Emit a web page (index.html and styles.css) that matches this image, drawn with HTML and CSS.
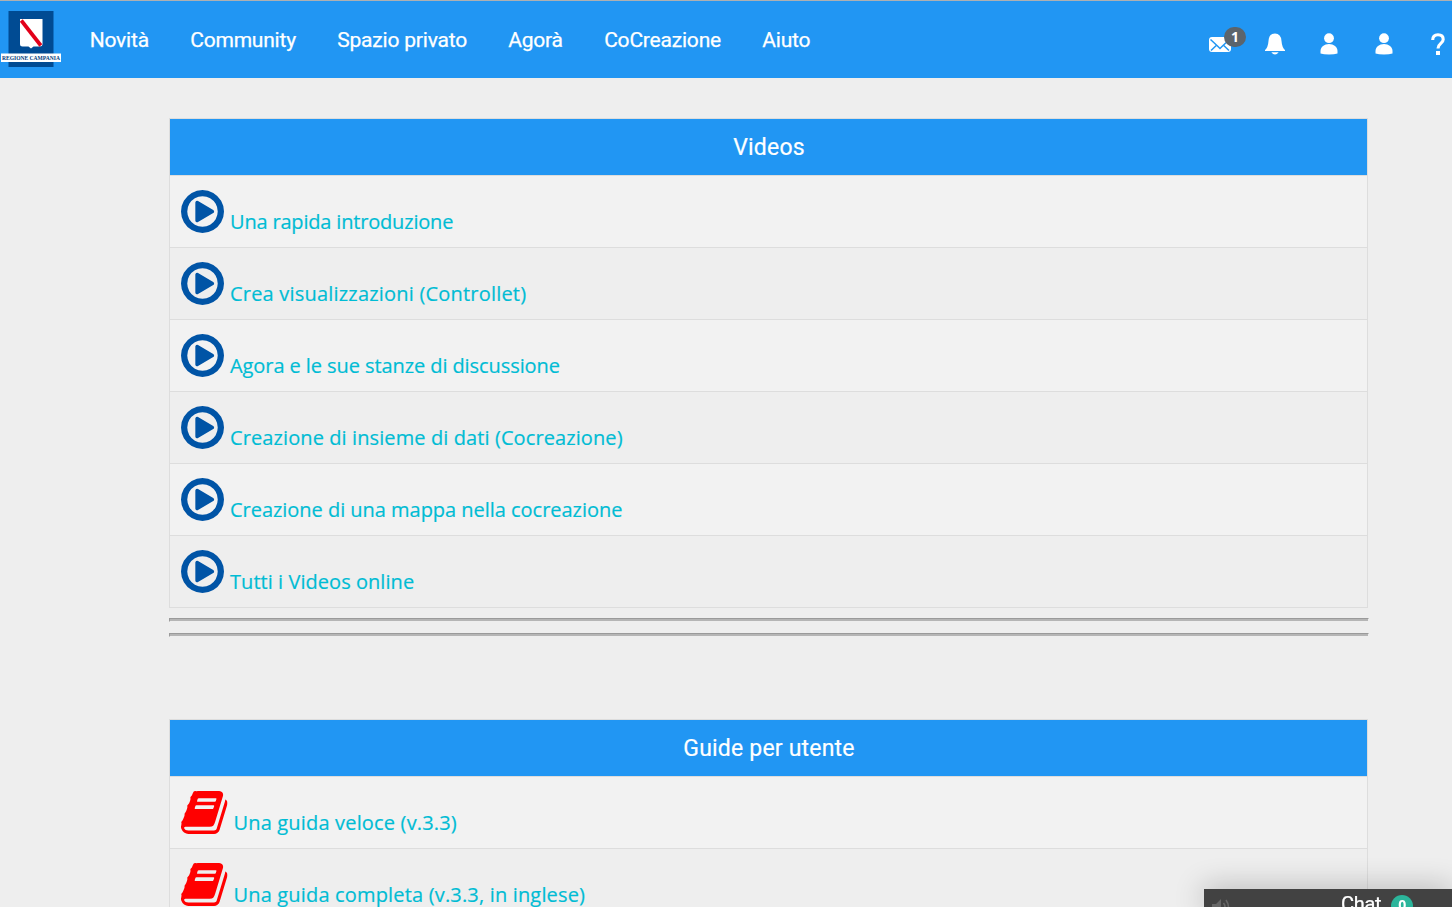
FILE: index.html
```html
<!DOCTYPE html>
<html lang="it">
<head>
<meta charset="utf-8">
<title>Aiuto</title>
<link rel="stylesheet" href="styles.css">
</head>
<body>
<svg class="defs" width="0" height="0">
  <symbol id="play" viewBox="0 0 1536 1536"><path d="M1184 768q0 37-32 55l-544 320q-15 9-32 9-16 0-32-8-32-19-32-56V448q0-37 32-56 33-18 64 1l544 320q32 18 32 55zm128 0q0-148-73-273t-198-198-273-73-273 73-198 198-73 273 73 273 198 198 273 73 273-73 198-198 73-273zm224 0q0 209-103 385.500t-279.500 279.500-385.500 103-385.500-103-279.500-279.500-103-385.500 103-385.500 279.500-279.500 385.500-103 385.500 103 279.500 279.500 103 385.500z"/></symbol>
  <symbol id="book" viewBox="64 128 1664 1536"><path d="M1703 478q40 57 18 129l-275 906q-19 64-76.500 107.500t-122.500 43.500h-923q-77 0-148.500-53.500t-99.500-131.500q-24-67-2-127 0-4 3-27t4-37q1-8-3-21.500t-3-19.500q2-11 8-21t16.500-23.500 16.500-23.500q23-38 45-91.500t30-91.500q3-10 .5-30t-.5-28q3-11 17-28t17-23q21-36 42-92t25-90q1-9-2.500-32t.5-28q4-13 22-30.500t22-22.500q19-26 42.500-84.500t27.500-96.500q1-8-3-25.500t-2-26.500q2-8 9-18t18-23 17-21q8-12 16.500-30.500t15-35 16-36 19.500-32 26.500-23.500 36-11.500 47.500 5.500l-1 3q38-9 51-9h761q74 0 114 56t18 130l-274 906q-36 119-71.500 153.500t-128.500 34.500h-869q-27 0-38 15-11 16-1 43 24 70 144 70h923q29 0 56-15.500t35-41.500l300-987q7-22 5-57 38 15 59 43zm-1064 2q-4 13 2 22.500t20 9.500h608q13 0 25.500-9.500t16.500-22.500l21-64q4-13-2-22.500t-20-9.500h-608q-13 0-25.500 9.500t-16.500 22.500zm-83 256q-4 13 2 22.500t20 9.500h608q13 0 25.500-9.500t16.500-22.500l21-64q4-13-2-22.500t-20-9.500h-608q-13 0-25.500 9.500t-16.500 22.500z"/></symbol>
  <symbol id="person" viewBox="0 0 18 22"><circle cx="9" cy="5.200" r="4.900"/><path d="M.5 20.500V18C.5 14 4.300 11 9 11s8.500 3 8.500 7v2.500q-3 1-8.500 1t-8.500-1z"/></symbol>
</svg>
<header class="topbar">
  <svg class="logo" viewBox="0 0 62 58" width="62" height="58">
    <rect x="8.500" y="1" width="45" height="56" fill="#004b93"/>
    <path d="M20 9h22.500v25q0 2.500-3 2.500h-6l-2.500 2-2.500-2h-6q-2.500 0-2.500-2.500z" fill="#fff"/>
    <path d="M21.300 10.500L40.800 35.500" stroke="#e2001a" stroke-width="3.700"/>
    <rect x="1" y="43.500" width="60" height="8.500" fill="#fff"/>
    <text class="logo-name" x="2" y="50" textLength="58" lengthAdjust="spacingAndGlyphs">REGIONE CAMPANIA</text>
  </svg>
  <nav class="menu">
    <a>Novità</a><a>Community</a><a>Spazio privato</a><a>Agorà</a><a>CoCreazione</a><a>Aiuto</a>
  </nav>
  <div class="tools">
    <span class="mail">
      <svg viewBox="0 0 22 15" width="22" height="15"><rect width="22" height="15" rx="3" fill="#fff"/><path d="M1.500 2.500L8.500 9 11 11.500 13.500 9 20.500 2.500M2 13.500L7.800 8M20 13.500L14.200 8" fill="none" stroke="#2196f3" stroke-width="1.500"/></svg>
      <b class="badge">1</b>
    </span>
    <svg class="bell" viewBox="0 0 20 22" width="20" height="22" fill="#fff"><path d="M0 18v-1q3-2.500 3.500-9Q4 .5 10 .5T16.500 8q.5 6.500 3.500 9v1zM6.300 19.300h7.400Q12 21.500 10 21.500t-3.700-2.200z"/></svg>
    <svg class="user" width="18" height="22"><use href="#person"/></svg>
    <svg class="user" width="18" height="22"><use href="#person"/></svg>
    <svg class="help" viewBox="0 0 14 22" width="14" height="22"><path d="M1.700 7Q1.800 1.700 7 1.700T12.200 6.500C12.200 10.500 7 10.500 7 15.500" fill="none" stroke="#fff" stroke-width="3.100"/><rect x="5" y="18" width="4" height="4" fill="#fff"/></svg>
  </div>
</header>
<main class="content">
  <section class="panel">
    <h2>Videos</h2>
    <a class="row"><svg class="play"><use href="#play"/></svg><span class="t1">Una rapida introduzione</span></a>
    <a class="row"><svg class="play"><use href="#play"/></svg><span class="t2">Crea visualizzazioni (Controllet)</span></a>
    <a class="row"><svg class="play"><use href="#play"/></svg><span class="t3">Agora e le sue stanze di discussione</span></a>
    <a class="row"><svg class="play"><use href="#play"/></svg><span class="t4">Creazione di insieme di dati (Cocreazione)</span></a>
    <a class="row"><svg class="play"><use href="#play"/></svg><span class="t5">Creazione di una mappa nella cocreazione</span></a>
    <a class="row"><svg class="play"><use href="#play"/></svg><span class="t6">Tutti i Videos online</span></a>
  </section>
  <div class="rules"><div class="rule"></div><div class="rule"></div></div>
  <section class="panel">
    <h2>Guide per utente</h2>
    <a class="row"><svg class="book"><use href="#book"/></svg><span class="t7">Una guida veloce (v.3.3)</span></a>
    <a class="row"><svg class="book"><use href="#book"/></svg><span class="t8">Una guida completa (v.3.3, in inglese)</span></a>
  </section>
</main>
<aside class="chat">
  <svg class="speaker" viewBox="0 0 18 16" width="18" height="16"><path d="M0 5h4l5-5v16l-5-5H0z" fill="#666"/><path d="M11.500 4q3 4 0 8M14 1q5 7 0 14" fill="none" stroke="#666" stroke-width="1.600"/></svg>
  <span class="chat-label">Chat</span><b class="chat-count">0</b>
</aside>
</body>
</html>
```
FILE: styles.css
```css
* { box-sizing: border-box; }
html, body { height: 100%; }
body { margin: 0; overflow: hidden; background: #eee; font-family: Roboto, "Liberation Sans", sans-serif; }
.defs { position: absolute; }
.topbar { display: flex; align-items: flex-start; height: 78px; border-top: 1px solid #aeb0b2; background: #2196f3; color: #fff; }
.logo { margin-top: 9px; flex: none; }
.logo-name { font: bold 7px "Liberation Serif", serif; fill: #003a7a; }
.menu { display: flex; gap: 41.300px; margin: 24px 0 0 27.700px; font-size: 21px; line-height: 30px; letter-spacing: -.2px; white-space: nowrap; -webkit-text-stroke: .25px #fff; }
.tools { display: flex; margin: 32px 7px 0 auto; }
.mail { position: relative; width: 22px; height: 15px; margin: 4px 34px 0 0; }
.mail svg { display: block; }
.badge { position: absolute; left: 15px; top: -10px; width: 22px; height: 20px; border-radius: 10px; background: #5b646c; font: bold 14px/19px "Open Sans", sans-serif; text-align: center; }
.bell { margin-right: 35px; }
.user { margin-right: 37px; fill: #fff; }
.user + .help { margin-left: 1px; }
.content { width: 1200px; margin: 40px 0 0 169px; }
.panel { width: 1199px; border: 1px solid #ddd; border-bottom: 0; }
.panel h2 { height: 56px; margin: 0; padding: 1px 0 0 1px; background: #2196f3; color: #fff; font-size: 23px; font-weight: 400; line-height: 56px; text-align: center; letter-spacing: .2px; -webkit-text-stroke: .2px #fff; }
.row { display: flex; height: 72px; padding: 14px 0 0 11px; border-top: 1px solid #ddd; color: #00bcd4; font: 20px/28px "Open Sans", "Noto Sans", sans-serif; }
.row:nth-child(even) { background: #f2f2f2; }
.row:last-child { height: 73px; border-bottom: 1px solid #ddd; }
.row span { margin-top: 18px; white-space: nowrap; -webkit-text-stroke: .2px #00bcd4; }
.t1 { letter-spacing: -.18px; }
.t2 { letter-spacing: .2px; }
.t3 { letter-spacing: -.08px; }
.t4 { letter-spacing: .1px; }
.t5 { letter-spacing: -.03px; }
.t6 { letter-spacing: .05px; }
.t7, .t8 { letter-spacing: .17px; }
.play { width: 43px; height: 43px; margin-right: 6px; fill: #0054a6; }
.book { width: 46.500px; height: 43px; margin-right: 6px; fill: #f00; }
.rules { display: flex; flex-direction: column; gap: 11px; margin: 10px 0 82px; }
.rule { height: 4px; border: 1px solid; border-color: #9a9a9a #eee #eee #9a9a9a; background: #b5b5b5; background-clip: padding-box; }
.chat { position: fixed; right: 0; bottom: 0; width: 248px; height: 18px; padding-left: 8px; display: flex; align-items: flex-start; background: #424242; color: #fff; box-shadow: 0 0 30px rgba(0,0,0,.3); }
.speaker { margin-top: 10px; }
.chat-label { margin: 3px 0 0 111px; font-size: 20px; line-height: 24px; letter-spacing: -.3px; -webkit-text-stroke: .25px #fff; }
.chat-count { width: 22px; height: 22px; margin: 6px 0 0 10px; border-radius: 11px; background: #2bb59b; font: bold 14px/19px "Open Sans", sans-serif; text-align: center; }
```
